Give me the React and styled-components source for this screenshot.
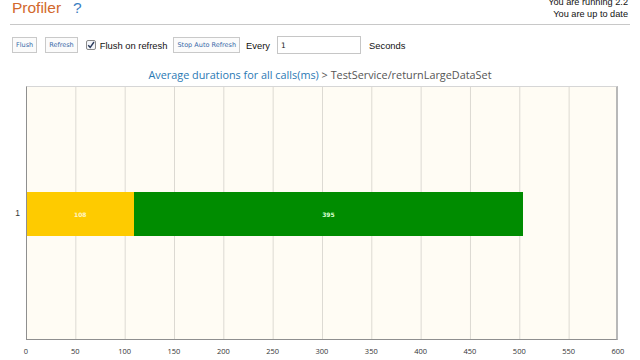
import React from "react";
import styled, { createGlobalStyle } from "styled-components";

const GlobalStyle = createGlobalStyle`
  html, body {
    margin: 0;
    padding: 0;
    background: #ffffff;
    overflow: hidden;
  }
  body {
    font-family: "Liberation Sans", Arial, sans-serif;
    color: #222;
  }
`;

const Page = styled.div`
  width: 640px;
  height: 360px;
  overflow: hidden;
  position: relative;
`;

const Header = styled.div`
  display: flex;
  justify-content: space-between;
  align-items: flex-end;
  margin: -8px 10px 0 10px;
  padding: 0 2px 3px 2px;
  border-bottom: 1px solid #c8c8c8;
  height: 29px;
`;

const Brand = styled.div`
  display: flex;
  align-items: baseline;
  gap: 12px;
  font-size: 15.5px;
  line-height: 18px;
  padding-bottom: 4px;
`;

const BrandName = styled.span`
  color: #d2682c;
`;

const Help = styled.span`
  color: #3a7ec2;
`;

const Version = styled.div`
  text-align: right;
  font-size: 9.2px;
  line-height: 12px;
  color: #111;
  margin-right: 0;
  padding-bottom: 1px;
`;

const Toolbar = styled.div`
  display: flex;
  align-items: center;
  gap: 6px;
  padding: 10px 12px 0 12px;
  height: 20px;
  font-size: 9.4px;
`;

const SmallButton = styled.button`
  font-family: "DejaVu Sans", Verdana, sans-serif;
  font-size: 6.5px;
  color: #3768a8;
  background: #fbfbfb;
  border: 1px solid #c9c9c9;
  height: 16px;
  padding: 0 3px;
  margin-right: ${({ $gap }) => $gap || 0}px;
  cursor: pointer;
`;

const CheckLabel = styled.label`
  display: flex;
  align-items: center;
  gap: 4px;
  color: #111;
`;

const Box = styled.span`
  width: 8px;
  height: 8px;
  border: 1px solid #8a8a8a;
  border-radius: 2px;
  background: #f4f6fa;
  display: inline-flex;
  align-items: center;
  justify-content: center;
`;

const TextLabel = styled.span`
  color: #111;
  margin-left: ${({ $ml }) => $ml || 0}px;
`;

const NumberInput = styled.input`
  width: 76px;
  height: 14px;
  border: 1px solid #c6c6c6;
  padding: 1px 3px;
  font-family: "DejaVu Sans", Verdana, sans-serif;
  font-size: 7.5px;
  color: #222;
  margin: 0 1px;
`;

const ChartTitle = styled.div`
  text-align: center;
  font-family: "Open Sans", "DejaVu Sans", sans-serif;
  font-size: 10.85px;
  margin-top: 12px;
  height: 15px;
  line-height: 15px;
  padding-left: 0px;
  color: #555;
`;

const TitleLink = styled.span`
  color: #2a79b4;
`;

const ChartArea = styled.div`
  display: flex;
  margin-top: 4px;
`;

const YAxis = styled.div`
  width: 26px;
  display: flex;
  align-items: center;
  justify-content: flex-end;
  padding-right: 6px;
  box-sizing: border-box;
  font-size: 8.5px;
  color: #333;
`;

const Plot = styled.div`
  width: 592px;
  height: 254px;
  box-sizing: border-box;
  border-left: 1px solid #8f8f8f;
  border-bottom: 1px solid #8f8f8f;
  border-top: 1px solid #d6d6d6;
  border-right: 2px solid #b8b8b8;
  background-color: #fffcf4;
  background-image: linear-gradient(
    to right,
    transparent calc(100% - 1px),
    #dcd9d2 calc(100% - 1px)
  );
  background-size: 49.333px 100%;
  display: flex;
  align-items: center;
`;

const BarRow = styled.div`
  display: flex;
  height: 44px;
  width: 100%;
  margin-top: 2px;
`;

const Segment = styled.div`
  background: ${({ $color }) => $color};
  display: flex;
  align-items: center;
  justify-content: center;
  font-family: "DejaVu Sans", Verdana, sans-serif;
  font-weight: bold;
  font-size: 6px;
  color: ${({ $text }) => $text};
`;

const XAxis = styled.div`
  display: flex;
  justify-content: space-between;
  width: 592px;
  margin-left: 26px;
  margin-top: 6px;
`;

const Tick = styled.div`
  width: 0;
  display: flex;
  justify-content: center;
  font-family: "Open Sans", "DejaVu Sans", sans-serif;
  font-size: 7.5px;
  color: #333;
  white-space: nowrap;
`;

const SCALE = 592 / 600;
const segments = [
  { value: 108, color: "#fecb00", text: "#fff6c8" },
  { value: 395, color: "#008c00", text: "#d8ffd0" },
];
const ticks = [0, 50, 100, 150, 200, 250, 300, 350, 400, 450, 500, 550, 600];

export default function App() {
  return (
    <Page>
      <GlobalStyle />
      <Header>
        <Brand>
          <BrandName>Profiler</BrandName>
          <Help>?</Help>
        </Brand>
        <Version>
          <div>You are running 2.2</div>
          <div>You are up to date</div>
        </Version>
      </Header>
      <Toolbar>
        <SmallButton $gap={2}>Flush</SmallButton>
        <SmallButton $gap={2}>Refresh</SmallButton>
        <CheckLabel>
          <Box>
            <svg width="8" height="8" viewBox="0 0 8 8">
              <path d="M1.2 4.2 L3.2 6.3 L7 1" stroke="#2b3b5c" strokeWidth="1.4" fill="none" />
            </svg>
          </Box>
          Flush on refresh
        </CheckLabel>
        <SmallButton>Stop Auto Refresh</SmallButton>
        <TextLabel>Every</TextLabel>
        <NumberInput defaultValue="1" />
        <TextLabel $ml={1}>Seconds</TextLabel>
      </Toolbar>
      <ChartTitle>
        <TitleLink>Average durations for all calls(ms)</TitleLink> &gt; TestService/returnLargeDataSet
      </ChartTitle>
      <ChartArea>
        <YAxis>1</YAxis>
        <Plot>
          <BarRow>
            {segments.map((s) => (
              <Segment
                key={s.value}
                $color={s.color}
                $text={s.text}
                style={{ width: `${s.value * SCALE}px` }}
              >
                {s.value}
              </Segment>
            ))}
          </BarRow>
        </Plot>
      </ChartArea>
      <XAxis>
        {ticks.map((t) => (
          <Tick key={t}>{t}</Tick>
        ))}
      </XAxis>
    </Page>
  );
}
